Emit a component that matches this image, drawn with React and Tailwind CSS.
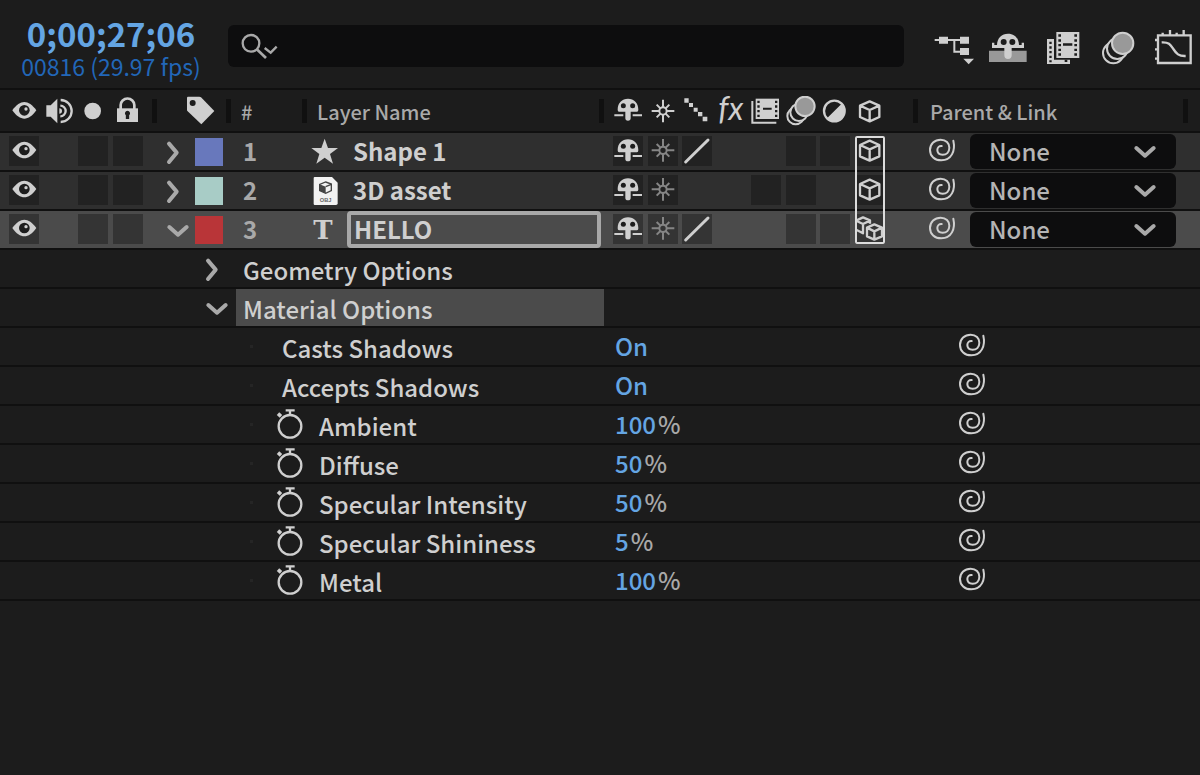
import React from 'react';

const ink = '#cfcfcf';
const dark = '#1d1d1d';

function Glyph({ children, lift = 0 }) {
  return (
    <svg aria-hidden="true" viewBox={`0 ${lift} 90 90`} className="block size-[30px] shrink-0" fill="none">
      {children}
    </svg>
  );
}

function Eye({ lift }) {
  return (
    <Glyph lift={lift}>
      <path d="M10 43C22 26 34 18 46 18s24 8 36 25C70 60 58 68 46 68S22 60 10 43Z" fill={ink} />
      <circle cx="46" cy="43" r="16" fill={dark} />
      <circle cx="51" cy="39" r="5" fill={ink} />
    </Glyph>
  );
}

function Speaker() {
  return (
    <Glyph>
      <path d="M7 28h13L40 8v74L20 62H7Z" fill={ink} />
      <path d="M49 29a16 16 0 0 1 0 32M50 12a33 33 0 0 1 0 66" stroke={ink} strokeWidth="7" />
      <path d="M46 37a8 8 0 0 1 0 16Z" fill={ink} />
    </Glyph>
  );
}

function Solo() {
  return (
    <Glyph>
      <circle cx="44" cy="45" r="25" fill={ink} />
    </Glyph>
  );
}

function Lock() {
  return (
    <Glyph>
      <path d="M23 42V27a20 19 0 0 1 41 0V42" stroke={ink} strokeWidth="8" />
      <rect x="12" y="37" width="63" height="41" fill={ink} />
      <path d="M43.500 44a8 8 0 0 1 5 14v11h-10V58a8 8 0 0 1 5-14Z" fill={dark} />
    </Glyph>
  );
}

function Shy({ lift }) {
  return (
    <Glyph lift={lift}>
      <path
        d="M14 41C14 20 27 8 45 8s31 12 31 33q0 6-4 6H53v20q0 7-8 7t-8-7V47H18q-4 0-4-6Z"
        fill={ink}
      />
      <circle cx="31" cy="29" r="7.500" fill={dark} />
      <circle cx="59" cy="29" r="7.500" fill={dark} />
      <path d="M4 58h27M59 58h28" stroke={ink} strokeWidth="6" />
    </Glyph>
  );
}

function Sun({ lift, color = ink }) {
  return (
    <Glyph lift={lift}>
      <circle cx="45" cy="45" r="11" stroke={color} strokeWidth="6" />
      <path
        d="M45 11v22M45 57v22M11 45h22M57 45h22M26 26l11 11M53 53l11 11M64 26 53 37M37 53 26 64"
        stroke={color}
        strokeWidth="6"
      />
    </Glyph>
  );
}

function Steps() {
  return (
    <Glyph>
      <path d="M7 7h13v13H7zM21 21h12v12H21zM35 35h12v12H35zM48 48h13v13H48zM62 62h14v14H62z" fill={ink} />
    </Glyph>
  );
}

function Slash({ lift }) {
  return (
    <Glyph lift={lift}>
      <path d="M11 78 78 12" stroke={ink} strokeWidth="9" strokeLinecap="round" />
    </Glyph>
  );
}

function Film() {
  return (
    <Glyph>
      <path d="M4 15v65h72" stroke={ink} strokeWidth="6" />
      <rect x="14" y="8" width="70" height="61" fill={ink} />
      <path
        d="M19 14h7v7h-7zM19 28h7v7h-7zM19 42h7v7h-7zM19 56h7v7h-7zM72 14h7v7h-7zM72 28h7v7h-7zM72 42h7v7h-7zM72 56h7v7h-7zM36 35h26v6H36z"
        fill={dark}
      />
    </Glyph>
  );
}

function Blur() {
  return (
    <Glyph>
      <g stroke={ink} strokeWidth="6" fill={dark}>
        <circle cx="29" cy="60" r="25" />
        <circle cx="39" cy="49" r="26" />
        <circle cx="57" cy="31" r="29" fill="#999999" />
      </g>
    </Glyph>
  );
}

function Adjust() {
  return (
    <Glyph>
      <circle cx="43" cy="45" r="31" stroke={ink} strokeWidth="7" />
      <path d="M65 23A31 31 0 0 1 21 67Z" fill={ink} />
    </Glyph>
  );
}

function Cube({ lift }) {
  return (
    <Glyph lift={lift}>
      <path
        d="M44 16 73 29v34L44 76 15 63V29ZM15 29l29 13 29-13M44 42v34"
        stroke={ink}
        strokeWidth="7"
        strokeLinejoin="round"
      />
    </Glyph>
  );
}

function Cubes() {
  return (
    <Glyph>
      <g stroke={ink} strokeWidth="7" strokeLinejoin="round">
        <path d="M5 19 24 10l21 9v10M5 21l19 9 21-10M24 30v28L5 48" />
        <path d="M58 31 81 41v26L58 77 36 67V41ZM36 41l22 11 23-11M58 52v25" />
      </g>
    </Glyph>
  );
}

function Tag() {
  return (
    <Glyph>
      <path d="M3 5q0-3 3-3h34q3 0 5 2l40 41L46 85 5 46q-2-2-2-4Z" fill={ink} />
      <circle cx="20" cy="21" r="9" fill={dark} />
    </Glyph>
  );
}

function Whip() {
  return (
    <Glyph lift={1}>
      <path
        d="M76 15C83 46 70 74 40 74 20 74 6 61 6 43 6 25 20 12 38 12c16 0 26 11 26 24 0 14-9 21-20 21-10 0-16-6-16-14s6-13 13-12"
        stroke={ink}
        strokeWidth="6"
        strokeLinecap="round"
      />
    </Glyph>
  );
}

function Stopwatch() {
  return (
    <Glyph>
      <circle cx="45" cy="52" r="34" stroke={ink} strokeWidth="7" />
      <path d="M45 4v14M32 4h27" stroke={ink} strokeWidth="7" />
      <path d="M9 14l9 8" stroke={ink} strokeWidth="11" />
    </Glyph>
  );
}

function Chevron({ open }) {
  return (
    <Glyph>
      <path
        d={open ? 'M19 36l26 23 26-23' : 'M18 20l23 27-23 28'}
        stroke="#a9a9a9"
        strokeWidth="12"
        strokeLinecap="round"
        strokeLinejoin="round"
      />
    </Glyph>
  );
}

function Star() {
  return (
    <Glyph>
      <path d="M44 5l10 28h30L60 51l9 29-25-18-25 18 9-29L4 33h30Z" fill={ink} />
    </Glyph>
  );
}

function ObjFile() {
  return (
    <Glyph>
      <path d="M14 3h52l17 17v62q0 5-5 5H14q-3 0-3-4V6q0-3 3-3Z" fill="#f2f2f2" />
      <path d="M47 18l17 6v20l-17 8-18-8V25Z" stroke="#444" strokeWidth="4" />
      <path d="M29 25l18 7v20l-18-8Z" fill="#444" />
      <path d="M47 32l17-7" stroke="#444" strokeWidth="4" />
      <text x="47" y="77" textAnchor="middle" fontSize="17" fontWeight="bold" fill="#666" fontFamily="Liberation Sans, sans-serif">
        OBJ
      </text>
    </Glyph>
  );
}

function TypeMark() {
  return (
    <span className="w-[30px] pr-1 text-center font-['DejaVu_Serif',serif] text-[26px] leading-[30px] font-bold">T</span>
  );
}

const tools = [
  {
    label: 'Composition mini-flowchart',
    box: '36 60 132 108',
    art: (
      <>
        <path d="M44 90h80M103 90v35h20" fill="none" stroke={ink} strokeWidth="6" />
        <path d="M57 80h27v21H57zM120 80h27v21h-27zM120 114h27v21h-27z" fill={ink} />
        <path d="M130 146h32l-16 17Z" fill={ink} />
      </>
    ),
  },
  {
    label: 'Hide shy layers',
    box: '201 60 132 108',
    art: (
      <>
        <path d="M207 122h113v34H207z" fill="#999999" />
        <path
          d="M216 98h7v7h8c1-22 14-34 33-34s32 12 33 34h8v-7h7v16h-37v22q0 11-11 11t-11-11v-22h-37Z"
          fill={ink}
        />
        <circle cx="251" cy="96" r="9" fill={dark} />
        <circle cx="277" cy="96" r="9" fill={dark} />
      </>
    ),
  },
  {
    label: 'Frame blending',
    box: '366 60 132 108',
    art: (
      <>
        <path d="M381 87h21v62h48v13h-69z" fill={ink} />
        <path d="M409 66h69v78h-69z" fill={ink} />
        <path
          d="M388 95h7v7h-7zM388 109h7v7h-7zM388 123h7v7h-7zM388 137h7v7h-7zM388 151h7v6h-7zM434 149h8v7h-8zM415 73h8v7h-8zM415 88h8v7h-8zM415 102h8v7h-8zM415 116h8v7h-8zM415 130h8v7h-8zM463 73h8v7h-8zM463 88h8v7h-8zM463 102h8v7h-8zM463 116h8v7h-8zM463 130h8v7h-8zM429 100h28v7h-28z"
          fill={dark}
        />
      </>
    ),
  },
  {
    label: 'Motion blur',
    box: '531 60 132 108',
    art: (
      <g stroke={ink} strokeWidth="6" fill={dark}>
        <circle cx="580" cy="129" r="31" />
        <circle cx="592" cy="116" r="31" />
        <circle cx="608" cy="100" r="32" fill="#999999" />
      </g>
    ),
  },
  {
    label: 'Graph editor',
    box: '696 60 132 108',
    art: (
      <g stroke={ink} strokeWidth="7" fill="none">
        <path d="M714 76h98v83h-98z" />
        <path d="M728 68v8M750 60v16M770 68v8M791 60v16M705 90h9M705 118h9M705 146h9" />
        <path d="M725 97c22-1 26 6 35 20s16 22 37 21" />
      </g>
    ),
  },
];

const switchHeads = [
  ['Shy', <Shy />],
  ['Collapse transformations', <Sun />],
  ['Quality', <Steps />],
  ['Effects', <span className="block pr-0.5 font-['Lato',sans-serif] text-[32px] leading-6 italic">fx</span>],
  ['Frame blend', <Film />],
  ['Motion blur', <Blur />],
  ['Adjustment layer', <Adjust />],
  ['3D layer', <Cube />],
];

const layers = [
  { id: 1, name: 'Shape 1', color: 'bg-[#6878bc]', icon: <Star />, slots: ['shy', 'sun', 'slash', null, null, 'box', 'box', 'cube'] },
  { id: 2, name: '3D asset', color: 'bg-[#a8ccc6]', icon: <ObjFile />, slots: ['shy', 'sun', null, null, 'box', 'box', null, 'cube'] },
  { id: 3, name: 'HELLO', color: 'bg-[#b93538]', icon: <TypeMark />, selected: true, slots: ['shy', 'sun', 'slash', null, null, 'box', 'box', 'cubes'] },
];

const slotArt = {
  shy: <Shy lift={-2} />,
  sun: <Sun lift={2} color="#858585" />,
  slash: <Slash />,
  cube: <Cube lift={2} />,
  cubes: <Cubes />,
  box: null,
};

const properties = [
  { name: 'Casts Shadows', value: 'On' },
  { name: 'Accepts Shadows', value: 'On' },
  { name: 'Ambient', value: '100', unit: '%' },
  { name: 'Diffuse', value: '50', unit: '%' },
  { name: 'Specular Intensity', value: '50', unit: '%' },
  { name: 'Specular Shininess', value: '5', unit: '%' },
  { name: 'Metal', value: '100', unit: '%' },
];

function Divider() {
  return <span className="h-6 w-[5px] shrink-0 bg-[#101010]" />;
}

function Toggle({ label, selected, children }) {
  return (
    <button
      type="button"
      aria-label={label}
      className={`block size-[30px] overflow-hidden ${selected ? 'bg-[#343434]' : 'bg-[#222222]'}`}
    >
      {children}
    </button>
  );
}

const cell = 'h-[39px] border-b-2 border-[#101010] p-0 text-left align-top';

function LayerRow({ layer, first }) {
  const { selected } = layer;
  return (
    <tr className={selected ? 'bg-[#4b4b4b]' : 'bg-[#2f2f2f]'}>
      <td className={cell}>
        <div className="ml-[7px] grid w-[138px] grid-cols-4 justify-items-center pt-[3px]">
          <Toggle label={`Show ${layer.name}`} selected={selected}>
            <Eye lift={1} />
          </Toggle>
          <span />
          <Toggle label={`Solo ${layer.name}`} selected={selected} />
          <Toggle label={`Lock ${layer.name}`} selected={selected} />
        </div>
      </td>
      <td className={cell}>
        <div className="flex items-center gap-0.5 pt-1 pl-1.5">
          <button type="button" aria-label={`Expand ${layer.name}`} aria-expanded={!!selected}>
            <Chevron open={selected} />
          </button>
          <button type="button" aria-label="Label colour" className={`size-7 ${layer.color}`} />
        </div>
      </td>
      <td className={cell}>
        <div className="pl-3 leading-9 font-bold text-[#a9a9a9]">{layer.id}</div>
      </td>
      <td className={cell}>
        <div className="flex h-[37px] items-center pl-[3px] leading-9 font-bold">
          {layer.icon}
          {selected ? (
            <input
              aria-label="Layer name"
              defaultValue={layer.name}
              className="ml-[7px] h-[37px] w-[254px] rounded-sm border-4 border-[#a8a8a8] bg-transparent pb-0.5 pl-[3px] outline-none"
            />
          ) : (
            <span className="pb-0.5 pl-[13px]">{layer.name}</span>
          )}
        </div>
      </td>
      <td className={cell}>
        <div className="ml-[7px] grid w-[276px] grid-cols-8 justify-items-center pt-[3px]">
          {layer.slots.map((slot, i) =>
            slot ? (
              <div key={i} className="relative size-[30px]">
                <Toggle label={`${switchHeads[i][0]}: ${layer.name}`} selected={selected}>
                  {slotArt[slot]}
                </Toggle>
                {first && i === 7 && (
                  <span className="pointer-events-none absolute top-0 left-0 z-10 h-[108px] w-[30px] rounded-xs border-2 border-[#dcdcdc]" />
                )}
              </div>
            ) : (
              <span key={i} />
            ),
          )}
        </div>
      </td>
      <td className={cell}>
        <div className="flex h-[37px] items-center pl-2.5">
          <button type="button" aria-label={`Pick whip: ${layer.name}`} className="pb-0.5">
            <Whip />
          </button>
          <div className="relative ml-3">
            <select
              aria-label={`Parent of ${layer.name}`}
              className="block h-[35px] w-[206px] appearance-none rounded-md bg-[#0d0d0e] pb-0.5 pl-[19px] leading-[33px] font-medium text-[#b4b4b4]"
            >
              <option>None</option>
            </select>
            <span className="pointer-events-none absolute top-0.5 right-4">
              <Chevron open />
            </span>
          </div>
        </div>
      </td>
    </tr>
  );
}

function GroupRow({ name, open }) {
  return (
    <tr>
      <td colSpan={4} className={cell}>
        <div className="flex h-[37px] items-center pl-[202px]">
          <button type="button" aria-label={`Toggle ${name}`} aria-expanded={!!open}>
            <Chevron open={open} />
          </button>
          <span className={`ml-1 flex-1 pt-0.5 pl-[7px] leading-[35px] ${open ? 'bg-[#4b4b4b]' : ''}`}>{name}</span>
        </div>
      </td>
      <td className={cell} />
      <td className={cell} />
    </tr>
  );
}

function PropertyRow({ name, value, unit }) {
  return (
    <tr>
      <td colSpan={4} className={cell}>
        <div className="flex h-[37px] items-center pl-[250px]">
          <span className="size-[3px] bg-[#252525]" />
          {unit ? (
            <>
              <button type="button" aria-label={`Animate ${name}`} className="ml-[22px] pb-0.5">
                <Stopwatch />
              </button>
              <span className="ml-3.5 pt-0.5 leading-[35px]">{name}</span>
            </>
          ) : (
            <span className="ml-[29px] pt-0.5 leading-[35px]">{name}</span>
          )}
        </div>
      </td>
      <td className={cell}>
        <div className="flex pl-[11px] leading-9">
          <button type="button" aria-label={`${name} ${value}`} className="text-[#64a5e3]">
            {value}
          </button>
          {unit && <span className="pl-0.5 text-[#a9a9a9]">{unit}</span>}
        </div>
      </td>
      <td className={cell}>
        <button type="button" aria-label={`Pick whip: ${name}`} className="ml-10 block pt-[3px]">
          <Whip />
        </button>
      </td>
    </tr>
  );
}

export default function App() {
  return (
    <main className="min-h-screen bg-[#1c1c1c] font-['Noto_Sans_CJK_SC',sans-serif] text-[24px] font-medium text-[#cfcfcf]">
      <header className="flex h-[90px] items-start border-b-2 border-[#101010]">
        <div className="w-[222px] shrink-0 pt-[15px] text-center">
          <div className="text-[33px] leading-9 font-bold text-[#64a5e3]">0;00;27;06</div>
          <div className="pt-px text-[23px] leading-7 font-normal text-[#2267b8]">00816 (29.97 fps)</div>
        </div>
        <label className="mt-[25px] ml-1.5 flex h-[42px] min-w-0 flex-1 items-center rounded-md bg-[#0d0d0e] pl-3">
          <svg aria-hidden="true" viewBox="720 92 114 90" className="h-[30px] w-[38px] shrink-0" fill="none">
            <circle cx="753" cy="129" r="25" stroke="#a9a9a9" strokeWidth="7" />
            <path d="M772 148l26 25" stroke="#a9a9a9" strokeWidth="8" />
            <path d="M794 143l18 14 18-18" stroke="#a9a9a9" strokeWidth="7" />
          </svg>
          <input type="search" aria-label="Search layers" className="min-w-0 flex-1 bg-transparent px-2 text-[20px] outline-none" />
        </label>
        <div className="ml-7 flex shrink-0 gap-[11px] pt-[30px] pr-1">
          {tools.map((t) => (
            <button key={t.label} type="button" aria-label={t.label}>
              <svg aria-hidden="true" viewBox={t.box} className="block h-9 w-11">
                {t.art}
              </svg>
            </button>
          ))}
        </div>
      </header>
      <table className="w-full table-fixed border-separate border-spacing-0">
        <colgroup>
          <col className="w-[157px]" />
          <col className="w-[74px]" />
          <col className="w-[76px]" />
          <col className="w-[297px]" />
          <col className="w-[314px]" />
          <col />
        </colgroup>
        <thead className="text-[20px] text-[#a9a9a9]">
          <tr>
            <th className={`${cell} font-medium`}>
              <div className="flex h-[41px] items-center justify-between pl-[7px]">
                <div className="grid w-[138px] grid-cols-4 justify-items-center">
                  <Eye />
                  <Speaker />
                  <Solo />
                  <Lock />
                </div>
                <Divider />
              </div>
            </th>
            <th className={`${cell} font-medium`}>
              <div className="flex h-[41px] items-center justify-between pl-[29px]">
                <Tag />
                <Divider />
              </div>
            </th>
            <th className={`${cell} font-medium`}>
              <div className="flex h-[41px] items-center justify-between pl-2.5">
                <span className="pt-[3px]">#</span>
                <Divider />
              </div>
            </th>
            <th className={`${cell} font-medium`}>
              <div className="flex h-[41px] items-center justify-between pl-2.5">
                <span className="pt-[3px]">Layer Name</span>
                <Divider />
              </div>
            </th>
            <th className={`${cell} font-normal`}>
              <div className="flex h-[41px] items-center justify-between pl-[7px]">
                <div className="grid w-[276px] grid-cols-8 items-center justify-items-center text-[#cfcfcf]">
                  {switchHeads.map(([label, art]) => (
                    <span key={label} title={label} className="block h-[30px]">
                      {art}
                    </span>
                  ))}
                </div>
                <Divider />
              </div>
            </th>
            <th className={`${cell} font-medium`}>
              <div className="flex h-[41px] items-center justify-between pr-3 pl-3">
                <span className="pt-[3px]">Parent &amp; Link</span>
                <Divider />
              </div>
            </th>
          </tr>
        </thead>
        <tbody>
          {layers.map((layer, i) => (
            <LayerRow key={layer.id} layer={layer} first={i === 0} />
          ))}
          <GroupRow name="Geometry Options" />
          <GroupRow name="Material Options" open />
          {properties.map((p) => (
            <PropertyRow key={p.name} {...p} />
          ))}
        </tbody>
      </table>
    </main>
  );
}
